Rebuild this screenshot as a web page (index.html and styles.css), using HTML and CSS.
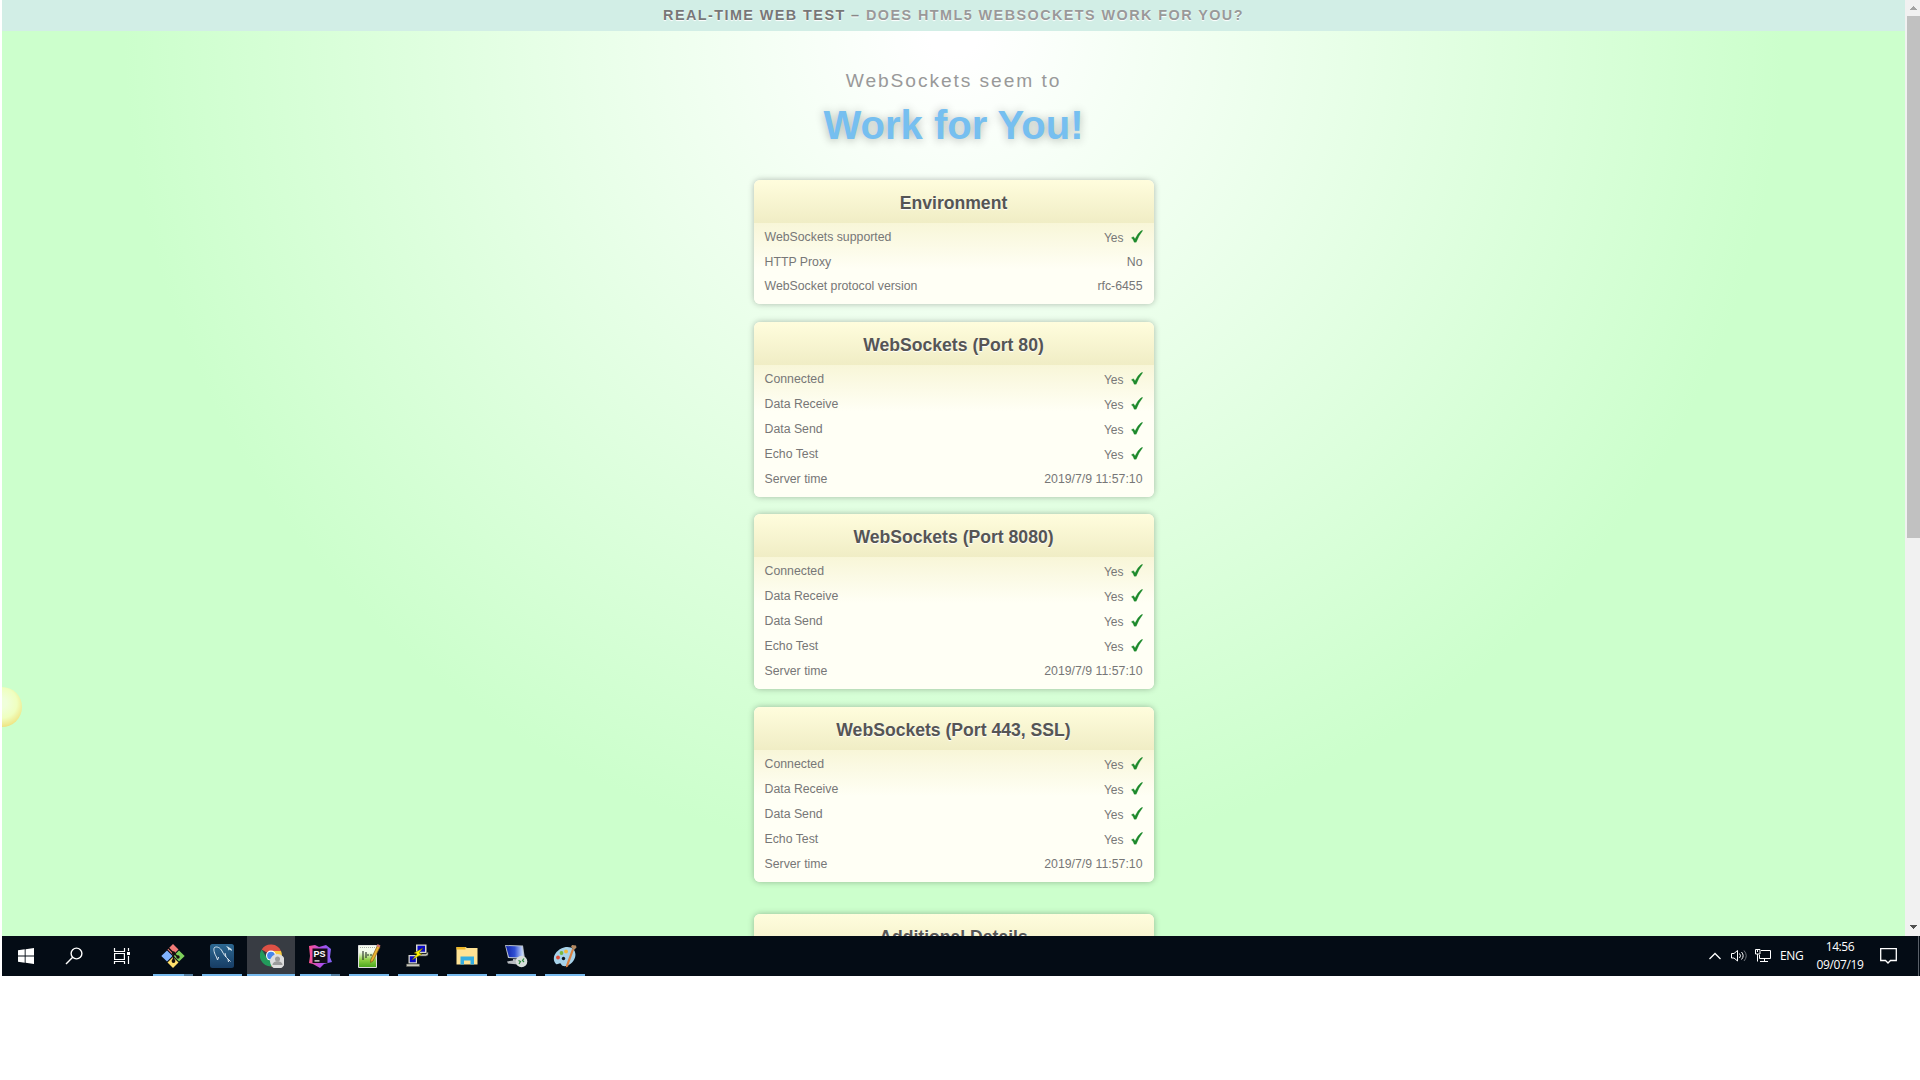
FILE: index.html
```
<!DOCTYPE html>
<html lang="en">
<head>
<meta charset="utf-8">
<title>Real-time Web Test</title>
<link rel="stylesheet" href="styles.css">
</head>
<body>
<svg class="defs" width="0" height="0" aria-hidden="true">
  <symbol id="check" viewBox="0 0 12 13"><path d="M.4 7.800 2.300 6.700Q3.500 7.500 4 9Q6.600 3.500 10 .8L11.800.4Q7.800 5.300 5.200 12.200H3.200Q2.300 9.200.4 7.800Z" fill="#1d8a2c" stroke="#1d8a2c" stroke-width=".3"/></symbol>
</svg>
<div class="desktop">
  <div class="browser">
    <div class="page">
      <header class="banner"><strong>Real-Time Web Test</strong>&nbsp;<span class="dash">–</span> Does HTML5 WebSockets work for you?</header>
      <main class="content">
        <p class="lead">WebSockets seem to</p>
        <h1 class="verdict">Work for You!</h1>
        <section class="card env">
          <h2 class="card-title">Environment</h2>
          <dl class="rows">
            <div class="row"><dt>WebSockets supported</dt><dd class="ok">Yes<svg class="tick"><use href="#check"/></svg></dd></div>
            <div class="row short"><dt>HTTP Proxy</dt><dd>No</dd></div>
            <div class="row short"><dt>WebSocket protocol version</dt><dd>rfc-6455</dd></div>
          </dl>
        </section>
        <section class="card port80">
          <h2 class="card-title">WebSockets (Port 80)</h2>
          <dl class="rows">
            <div class="row"><dt>Connected</dt><dd class="ok">Yes<svg class="tick"><use href="#check"/></svg></dd></div>
            <div class="row"><dt>Data Receive</dt><dd class="ok">Yes<svg class="tick"><use href="#check"/></svg></dd></div>
            <div class="row"><dt>Data Send</dt><dd class="ok">Yes<svg class="tick"><use href="#check"/></svg></dd></div>
            <div class="row"><dt>Echo Test</dt><dd class="ok">Yes<svg class="tick"><use href="#check"/></svg></dd></div>
            <div class="row"><dt>Server time</dt><dd>2019/7/9 11:57:10</dd></div>
          </dl>
        </section>
        <section class="card port8080">
          <h2 class="card-title">WebSockets (Port 8080)</h2>
          <dl class="rows">
            <div class="row"><dt>Connected</dt><dd class="ok">Yes<svg class="tick"><use href="#check"/></svg></dd></div>
            <div class="row"><dt>Data Receive</dt><dd class="ok">Yes<svg class="tick"><use href="#check"/></svg></dd></div>
            <div class="row"><dt>Data Send</dt><dd class="ok">Yes<svg class="tick"><use href="#check"/></svg></dd></div>
            <div class="row"><dt>Echo Test</dt><dd class="ok">Yes<svg class="tick"><use href="#check"/></svg></dd></div>
            <div class="row"><dt>Server time</dt><dd>2019/7/9 11:57:10</dd></div>
          </dl>
        </section>
        <section class="card port443">
          <h2 class="card-title">WebSockets (Port 443, SSL)</h2>
          <dl class="rows">
            <div class="row"><dt>Connected</dt><dd class="ok">Yes<svg class="tick"><use href="#check"/></svg></dd></div>
            <div class="row"><dt>Data Receive</dt><dd class="ok">Yes<svg class="tick"><use href="#check"/></svg></dd></div>
            <div class="row"><dt>Data Send</dt><dd class="ok">Yes<svg class="tick"><use href="#check"/></svg></dd></div>
            <div class="row"><dt>Echo Test</dt><dd class="ok">Yes<svg class="tick"><use href="#check"/></svg></dd></div>
            <div class="row"><dt>Server time</dt><dd>2019/7/9 11:57:10</dd></div>
          </dl>
        </section>
        <section class="card details">
          <h2 class="card-title">Additional Details</h2>
        </section>
      </main>
      <div class="ball"></div>
    </div>
    <div class="scrollbar">
      <svg class="arrow" viewBox="0 0 15 16"><path d="M8 6h1v1h1v1h1v1h1v1H5V9h1V8h1V7h1z" fill="#a3a3a3"/></svg>
      <div class="thumb"></div>
      <svg class="arrow down" viewBox="0 0 15 16"><path d="M5 5h7v1h-1v1h-1v1H9v1H8V8H7V7H6V6H5z" fill="#505050"/></svg>
    </div>
  </div>

  <footer class="taskbar">
    <div class="system">
      <span class="slot"><svg viewBox="0 0 24 24"><path d="M4 6.200 10.700 5.300V11.500H4zM11.600 5.200 20 4V11.500H11.600zM4 12.500H10.700V18.700L4 17.800zM11.600 12.500H20V20L11.600 18.800z" fill="#fff"/></svg></span>
      <span class="slot"><svg viewBox="0 0 24 24" fill="none" stroke="#fff" stroke-width="1.400"><circle cx="14.500" cy="9.500" r="5.400"/><path d="M10.700 13.300 4 20"/></svg></span>
      <span class="slot"><svg viewBox="0 0 24 24" fill="none" stroke="#fff" stroke-width="1.200"><path d="M4.500 4V7.500H14.500V4M4.500 20V17.500H14.500V20M4.600 9.500H14.400V15.500H4.600zM18.500 4V7M18.500 12V20"/><path d="M17 8h3v3h-3z" fill="#fff" stroke="none"/></svg></span>
    </div>
    <div class="apps">
      <span class="slot app grouped">
        <svg viewBox="0 0 24 24"><path d="m12 0 5.500 5.500L12 11 6.500 5.500z" fill="#f27b78"/><path d="M6 6.500 11.500 12 6 17.500.3 12z" fill="#80b3ff"/><path d="m18 6.500 5.700 5.500L18 17.500 12.500 12z" fill="#7ed05b"/><path d="m12 13 5.500 5.500L12 24l-5.500-5.500z" fill="#ffe06c"/><path d="m7.500 4 5 5v9M12.500 9l4.500 4" fill="none" stroke="#16100f" stroke-width="1.500"/><circle cx="12.500" cy="9" r="1.700" fill="#16100f"/><circle cx="12.500" cy="17" r="1.900" fill="#16100f"/><circle cx="17" cy="13" r="1.700" fill="#16100f"/></svg>
      </span>
      <span class="slot app">
        <svg viewBox="0 0 24 24"><defs><linearGradient id="sea" x2="0" y2="1"><stop stop-color="#2c6790"/><stop offset="1" stop-color="#173d65"/></linearGradient></defs><rect width="24" height="24" rx="2.500" fill="url(#sea)"/><path d="M7.500 16 6.500 13C4.500 10 3 5 4.500 3.500 7 2 10.500 4 12 7c1.500 3 3.500 6 6 8l2.500 2.500M7.500 16l1.200-3M15 9l1 4M18 15l.5 3" fill="none" stroke="#d9e6ef" stroke-width="1"/><path d="m16 2 2 .7L21.500 5l.5 2-2.500-1.500-1 1-.5-2z" fill="#dcebf2"/></svg>
      </span>
      <span class="slot app active">
        <svg viewBox="0 0 24 24"><path d="M11 11 1.700 5.500A11 11 0 0 1 21 7H11z" fill="#de5145"/><path d="M11 11 6.500 13.500 1.700 5.500A11 11 0 0 0 11 22.500L15 14z" fill="#229a5b"/><path d="M11 7H21A11 11 0 0 1 11 22.500L15.500 14z" fill="#f8ca41"/><circle cx="11" cy="11.600" r="5" fill="#fff"/><circle cx="11" cy="11.600" r="3.900" fill="#4686ed"/><circle cx="17.500" cy="17.500" r="7.500" fill="#dedede"/><circle cx="17.500" cy="15" r="2.500" fill="#9b9b9b"/><path d="M12.500 21c0-5 10-5 10 0z" fill="#9b9b9b"/></svg>
      </span>
      <span class="slot app grouped">
        <svg viewBox="0 0 24 24"><defs><linearGradient id="storm"><stop stop-color="#ff518e"/><stop offset=".55" stop-color="#ad4dea"/><stop offset="1" stop-color="#8063f5"/></linearGradient></defs><path d="M1 2 7 1l4 2 7-2 5 4-1 8 2 5-8 2-4 4-7-4-4-1 1-7z" fill="url(#storm)"/><path d="M4.500 4.500h15v14.500h-15z" fill="#130e17"/><path d="M6.500 16.300h5v1.200h-5z" fill="#fff"/><text x="5.600" y="13" class="logo-text">PS</text></svg>
      </span>
      <span class="slot app">
        <svg viewBox="0 0 24 24"><defs><linearGradient id="leaf" x2="0" y2="1"><stop offset=".3" stop-color="#f4fcec"/><stop offset=".65" stop-color="#8fd044"/><stop offset="1" stop-color="#48a51d"/></linearGradient></defs><path d="M1.500 1.500h18v22h-18z" fill="url(#leaf)" stroke="#dedede"/><path d="M3 3.500h15" stroke="#aaa" stroke-dasharray="1 1"/><path d="M6 7v9M9 8v6M10 11h2M13 11h2" stroke="#253025" stroke-width="1.100"/><path d="m20.500 1.500 2.500 1.500-7 14-2.500 1.500.3-3z" fill="#eab42f" stroke="#805219" stroke-width=".7"/><path d="m20.500 0 3 1.500-.8 2-3-1.500z" fill="#d2766d"/></svg>
      </span>
      <span class="slot app">
        <svg viewBox="0 0 24 24"><path d="M10 .5h10.500v8.500H10zM2.500 11H11v8.500H2.500z" fill="#d8d8cd"/><path d="M11.500 1.800h7.500v6h-7.500zM3.800 12.200h6v6h-6z" fill="#0808c5"/><path d="M12 10h8l2-2v3l-2 1h-8zM.5 20h13v2.500h-13z" fill="#c8c8bc" stroke="#55554f" stroke-width=".6"/><path d="m17 4-9 5 3 1-5 6 10-6-3-1z" fill="#fff500" stroke="#555000" stroke-width=".5"/></svg>
      </span>
      <span class="slot app">
        <svg viewBox="0 0 24 24"><path d="M1.500 3h9l1.500 1h10.500v16.500h-21z" fill="#ffe394"/><path d="M1.500 3h9v2.500h-9z" fill="#efb829"/><path d="M5.500 12.500h13.500v8h-3.500v-4H9v4H5.500z" fill="#35aee2"/></svg>
      </span>
      <span class="slot app">
        <svg viewBox="0 0 24 24"><defs><linearGradient id="screen"><stop stop-color="#1025a8"/><stop offset=".5" stop-color="#3150d4"/><stop offset="1" stop-color="#d4e5ff"/></linearGradient></defs><path d="m1 1 18 .5 2 13.500L4 14z" fill="#b8c1cd"/><path d="m2 2 16 .5 1.500 11L5 13z" fill="url(#screen)"/><path d="m9 15 6 .5-1 5-10-1-1-2 6-1z" fill="#b8bcc1"/><circle cx="17.500" cy="17.500" r="5.800" fill="#d8dedb"/><path d="m14.500 16.500 2 1-1.500 2.500M20 14.500l-1.500 2 1.500 1.500" fill="none" stroke="#2b8c3c" stroke-width="1.200"/></svg>
      </span>
      <span class="slot app">
        <svg viewBox="0 0 24 24"><path d="M3 20C-2 15 2 6 11 3.500c8-2 13 3 11 10C20 21 10 25 8 20c-1-2-3 1-5 0z" fill="#a7d2e9"/><circle cx="5" cy="13.500" r="1.900" fill="#df4a35"/><circle cx="8.500" cy="9" r="1.900" fill="#77b93f"/><circle cx="13" cy="7.500" r="1.900" fill="#f0b83b"/><circle cx="10.500" cy="14.500" r="1.700" fill="#0c1720"/><path d="m19 5 2 .5-6 17-2.200 1 .5-3z" fill="#db8040"/><path d="m18 3 1-2 4 .5.500 2L21 6z" fill="#b48a62"/></svg>
      </span>
    </div>
    <div class="tray">
      <svg class="chevron" viewBox="0 0 12 8"><path d="m.5 7 5.500-5.500L11.500 7" fill="none" stroke="#fff" stroke-width="1.300"/></svg>
      <svg class="speaker" viewBox="0 0 17 16" fill="none" stroke="#fff"><path d="M.5 5.500H3L6.500 2.500V13L3 10H.500z"/><path d="M8.500 5.500q2 2.300 0 4.500M10.500 4q3.300 3.800 0 7.500"/><path d="M13 2.500q4.500 5.300 0 10.500" stroke="#6f747a"/></svg>
      <svg class="network" viewBox="0 0 17 16" fill="none" stroke="#fff"><path d="M6 2.500H15.500V10.500H4.500V7M9.500 10.500V13.500M5 13.500H13M.5 1.500H5V6H.500zM2.500 2v2M2.500 6V13.500"/></svg>
      <span class="lang">ENG</span>
      <div class="clock"><span>14:56</span><span>09/07/19</span></div>
      <svg class="notice" viewBox="0 0 17 17"><path d="M.7 1.700H16.300V13.500H10.500L8 16 5.500 13.500H.7z" fill="none" stroke="#fff" stroke-width="1.300"/></svg>
      <span class="peek"></span>
    </div>
  </footer>
</div>
</body>
</html>
```
FILE: styles.css
```
* { box-sizing: border-box; }
html, body { height: 100%; }
body { margin: 0; background: #fff; overflow: hidden; font-family: "Liberation Sans", Arial, sans-serif; }
h1, h2, p, dl, dd { margin: 0; }
.defs { display: block; }
.desktop { width: 1918px; height: 976px; margin-left: 2px; display: flex; flex-direction: column; }

.browser { height: 936px; display: flex; overflow: hidden; }
.page {
  position: relative;
  width: 1903px;
  height: 936px;
  overflow: hidden;
  background: radial-gradient(circle 830px at 50% 31px, #fff 3%, #cfc);
}
.banner {
  height: 31px;
  line-height: 30px;
  text-align: center;
  background: #d2eee6;
  color: #999;
  font-size: 14.4px;
  font-weight: bold;
  letter-spacing: 1.44px;
  text-transform: uppercase;
  text-shadow: 0 1px 1px #fff;
}
.banner strong { color: #777; }
.dash { color: #888; }
.content { width: 400px; margin: 0 auto; }
.lead {
  padding-top: 38px;
  height: 61px;
  line-height: 23px;
  text-align: center;
  white-space: nowrap;
  color: #999;
  font-size: 19.2px;
  letter-spacing: 1.92px;
}
.verdict {
  height: 88px;
  line-height: 66px;
  text-align: center;
  color: #76bff0;
  font-size: 40px;
  text-shadow: 0 1px 10px rgba(0, 0, 0, .3);
}

.card {
  height: 175px;
  border-radius: 6px;
  background: #fffff5;
  box-shadow: 0 0 6px rgba(0, 0, 0, .28);
  overflow: hidden;
}
.env { height: 124px; margin-bottom: 18px; }
.port80 { margin-bottom: 17px; }
.port8080 { margin-bottom: 18px; }
.port443 { margin-bottom: 32px; }
.card-title {
  height: 43px;
  line-height: 47px;
  text-align: center;
  color: #555;
  font-size: 17.6px;
  text-shadow: 0 1px 1px #fff;
  background: linear-gradient(#fffddd, #f0edc5);
}
.rows {
  padding: 1px 11px 0;
  height: 132px;
  background: linear-gradient(#f8f6d8, #fffff5 46px);
}
.row { display: flex; justify-content: space-between; height: 25px; line-height: 26px; color: #777; font-size: 12.3px; }
.row.short { height: 24px; }
.ok { display: flex; padding-top: 1px; font-size: 12px; }
.tick { width: 12px; height: 13px; margin: 5px 0 0 7px; }

.ball {
  position: absolute;
  left: -20px;
  top: 687px;
  width: 40px;
  height: 40px;
  border-radius: 50%;
  background: radial-gradient(circle at 50% 40%, #f0ffda 15%, #efffc0 48%, #efe88c 72%, #efd060 88%);
}

.scrollbar { width: 15px; background: #f1f1f1; display: flex; flex-direction: column; }
.arrow { width: 15px; height: 16px; }
.thumb { height: 522px; margin-left: 2px; background: #c1c1c1; }
.down { margin-top: auto; }

.taskbar { height: 40px; display: flex; background: #040c15; color: #fff; }
.system, .apps, .tray { display: flex; }
.slot { width: 48px; height: 40px; display: flex; align-items: center; justify-content: center; }
.slot svg { width: 24px; height: 24px; }
.apps { gap: 1px; margin-left: 3px; }
.app { background: linear-gradient(#76b9ed, #76b9ed) 4px 38px / 40px 2px no-repeat; }
.app.grouped { background: linear-gradient(90deg, #76b9ed 31px, #527da0 31px) 4px 38px / 40px 2px no-repeat; }
.app.active { background: linear-gradient(#76b9ed, #76b9ed) 0 38px / 48px 2px no-repeat #383c43; }
.app.active svg { margin-left: 2px; }
.logo-text { font: bold 9px "Liberation Sans", Arial, sans-serif; fill: #fff; }

.tray { margin-left: auto; align-items: center; font-family: "Open Sans", "Noto Sans", sans-serif; font-size: 12px; }
.chevron { width: 12px; height: 8px; margin-right: 10px; }
.speaker { width: 17px; height: 16px; margin-right: 7px; }
.network { width: 17px; height: 16px; margin-right: 8px; }
.lang { width: 25px; padding-bottom: 1px; letter-spacing: -.3px; }
.clock { width: 70px; display: flex; flex-direction: column; align-items: center; line-height: 18px; letter-spacing: -.4px; }
.notice { width: 17px; height: 17px; margin: 0 21px 2px 5px; }
.peek { width: 1px; height: 40px; margin-right: 1px; background: #596068; }
```
